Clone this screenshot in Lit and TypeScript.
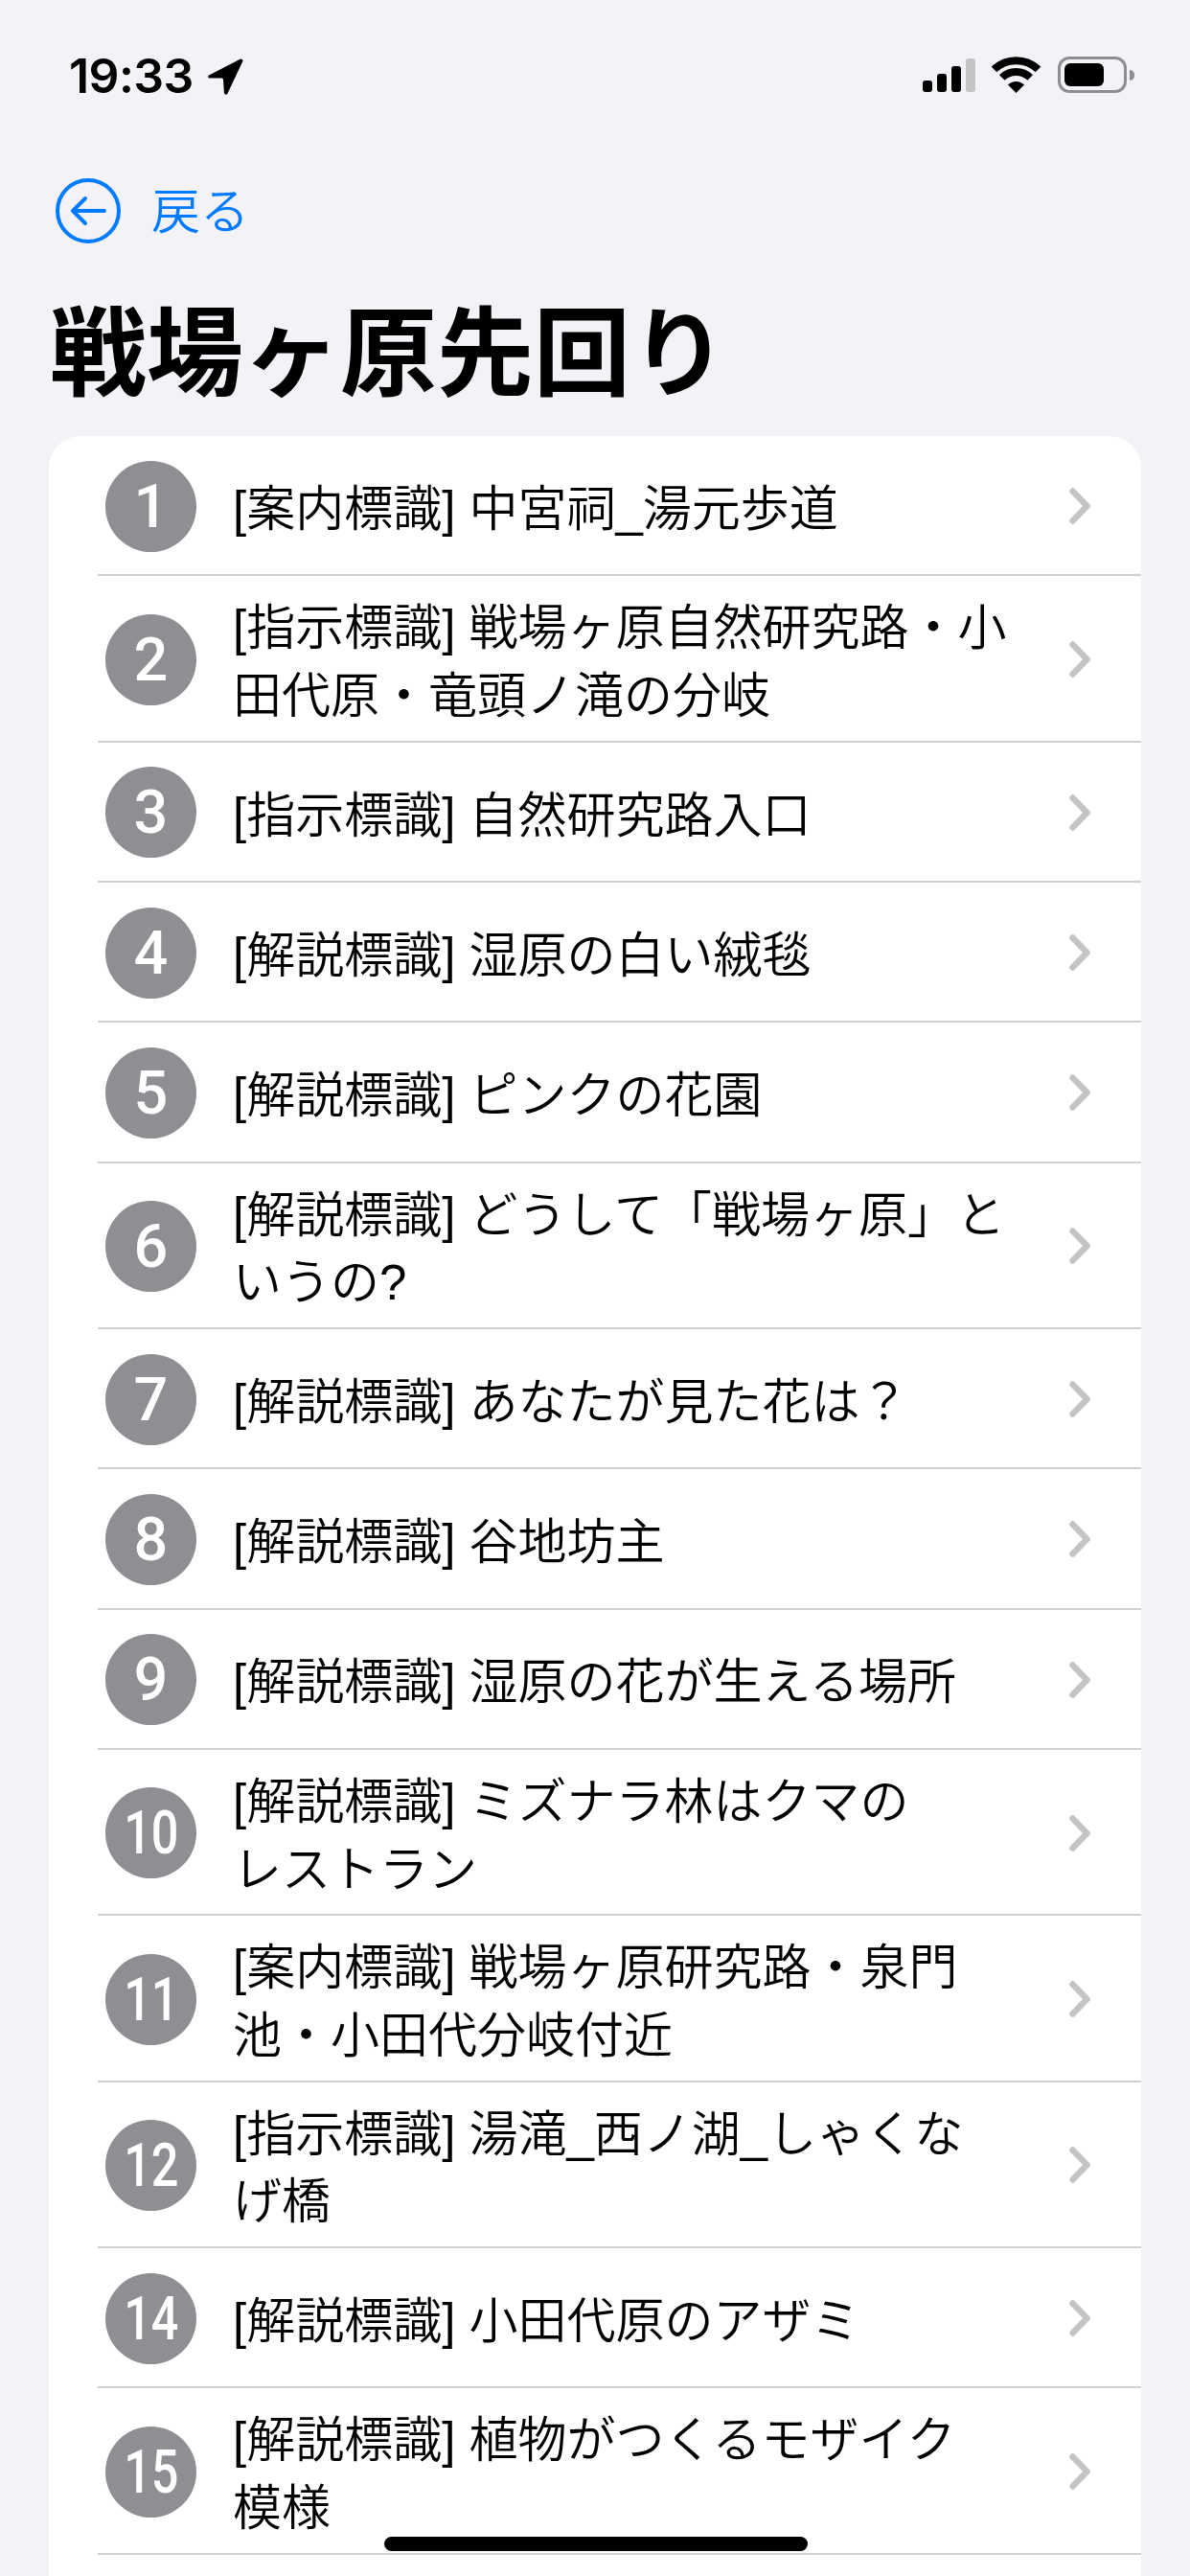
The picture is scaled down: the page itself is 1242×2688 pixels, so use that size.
import { LitElement, html, css, svg } from 'lit';
import { customElement } from 'lit/decorators.js';

const rows = [
  { no: '1', text: '[案内標識] 中宮祠_湯元歩道' },
  { no: '2', text: '[指示標識] 戦場ヶ原自然研究路・小\n田代原・竜頭ノ滝の分岐' },
  { no: '3', text: '[指示標識] 自然研究路入口' },
  { no: '4', text: '[解説標識] 湿原の白い絨毯' },
  { no: '5', text: '[解説標識] ピンクの花園' },
  { no: '6', text: '[解説標識] どうして「戦場ヶ原」と\nいうの?' },
  { no: '7', text: '[解説標識] あなたが見た花は？' },
  { no: '8', text: '[解説標識] 谷地坊主' },
  { no: '9', text: '[解説標識] 湿原の花が生える場所' },
  { no: '10', text: '[解説標識] ミズナラ林はクマの\nレストラン' },
  { no: '11', text: '[案内標識] 戦場ヶ原研究路・泉門\n池・小田代分岐付近' },
  { no: '12', text: '[指示標識] 湯滝_西ノ湖_しゃくな\nげ橋' },
  { no: '14', text: '[解説標識] 小田代原のアザミ' },
  { no: '15', text: '[解説標識] 植物がつくるモザイク\n模様' },
];

const chevron = svg`<path d="M3.5 3.5 18.5 19 3.5 34.5" fill="none" stroke="#c4c4c6" stroke-width="6.5" stroke-linecap="round" stroke-linejoin="round"/>`;

@customElement('app-root')
export class AppRoot extends LitElement {
  static styles = css`
    :host {
      display: block;
      font-family: 'Liberation Sans', 'Noto Sans CJK JP', sans-serif;
    }

    .page {
      position: relative;
      display: flex;
      flex-direction: column;
      height: 2688px;
      overflow: hidden;
      background: #f2f2f7;
      color: #000;
    }

    .status {
      display: flex;
      align-items: flex-start;
      height: 58px;
      padding: 58px 58px 0 72px;
    }

    .time {
      font-family: Inter, sans-serif;
      font-size: 50px;
      font-weight: 600;
      line-height: 42px;
      letter-spacing: -0.6px;
    }

    .arrow {
      margin: 3px 0 0 14px;
    }

    .status-right {
      display: flex;
      margin-left: auto;
    }

    .signal {
      display: flex;
      align-items: flex-end;
      gap: 5px;
      height: 35px;
      margin: 3px 17px 0 0;
    }

    .signal i {
      width: 10px;
      border-radius: 3px;
      background: #000;
    }

    .signal i.off {
      background: #c4c4c6;
    }

    .wifi {
      margin-right: 18px;
    }

    .battery {
      display: flex;
      align-items: center;
      margin-top: 1px;
    }

    .battery-body {
      box-sizing: border-box;
      width: 72px;
      height: 38px;
      padding: 4px;
      border: 3px solid #8e8e90;
      border-radius: 12px;
    }

    .battery-fill {
      width: 41px;
      height: 100%;
      border-radius: 6px;
      background: #000;
    }

    .battery-nub {
      width: 5px;
      height: 11px;
      margin-left: 3px;
      border-radius: 0 6px 6px 0;
      background: #8e8e90;
    }

    .back {
      display: flex;
      align-items: center;
      gap: 32px;
      height: 68px;
      margin: 70px 0 0 58px;
      color: #007aff;
      font-size: 51px;
      font-weight: 350;
      line-height: 68px;
    }

    .back span {
      margin-top: 3px;
    }

    h1 {
      margin: 56px 0 0 52px;
      font-size: 101px;
      font-weight: 700;
      line-height: 120px;
    }

    .card {
      flex: 1;
      margin: 25px 51px 0;
      padding-left: 51px;
      overflow: hidden;
      border-radius: 33px 33px 0 0;
      background: #fff;
    }

    .row {
      box-sizing: border-box;
      display: flex;
      align-items: center;
      min-height: 146.33px;
      padding: 16px 53px 14px 8px;
      border-bottom: 2px solid #d0d0d2;
    }

    .badge {
      flex: none;
      display: flex;
      align-items: center;
      justify-content: center;
      width: 95px;
      height: 95px;
      margin-right: 38px;
      border-radius: 50%;
      background: #8e8e93;
      color: #fff;
      font-family: Roboto, sans-serif;
      font-size: 63px;
      font-weight: 500;
    }

    .badge.wide span {
      transform: scaleX(0.8);
    }

    .text {
      flex: 1;
      margin: 4px 0 -4px;
      font-size: 51px;
      font-weight: 350;
      line-height: 70.67px;
      white-space: pre-line;
    }

    .home {
      position: absolute;
      left: 401px;
      top: 2647px;
      width: 442px;
      height: 15px;
      border-radius: 8px;
      background: #000;
    }
  `;

  render() {
    return html`
      <div class="page">
        <div class="status">
          <span class="time">19:33</span>
          <svg class="arrow" width="38" height="38" viewBox="0 0 38 38">
            <path d="M2.2 17.5 34.5.8c1.8-.9 3.4.6 2.7 2.4L21.5 36.4c-.8 1.8-3.4 1.4-3.6-.5l-.9-13.6c-.1-1-.8-1.7-1.8-1.8L2.9 20.6c-1.9-.1-2.4-2.2-.7-3.1z" fill="#000"/>
          </svg>
          <div class="status-right">
            <div class="signal">
              <i style="height:12px"></i>
              <i style="height:19px"></i>
              <i style="height:27px"></i>
              <i class="off" style="height:35px"></i>
            </div>
            <svg class="wifi" width="51" height="39" viewBox="0 0 51 39">
              <path d="M2.5 14.5a33 33 0 0 1 46 0M10.8 23a21 21 0 0 1 29.4 0" fill="none" stroke="#000" stroke-width="8"/>
              <path d="M25.5 39 17 30.5a12 12 0 0 1 17 0z" fill="#000"/>
            </svg>
            <div class="battery">
              <div class="battery-body"><div class="battery-fill"></div></div>
              <div class="battery-nub"></div>
            </div>
          </div>
        </div>

        <div class="back">
          <svg width="68" height="68" viewBox="0 0 68 68">
            <circle cx="34" cy="34" r="32" fill="none" stroke="#007aff" stroke-width="4"/>
            <path d="M51 34H18M31 21 18 34l13 13" fill="none" stroke="#007aff" stroke-width="4" stroke-linecap="round" stroke-linejoin="round"/>
          </svg>
          <span>戻る</span>
        </div>

        <h1>戦場ヶ原先回り</h1>

        <div class="card">
          ${rows.map(r => html`
            <div class="row">
              <div class="badge ${r.no.length > 1 ? 'wide' : ''}"><span>${r.no}</span></div>
              <div class="text">${r.text}</div>
              <svg width="22" height="38" viewBox="0 0 22 38">${chevron}</svg>
            </div>
          `)}
        </div>

        <div class="home"></div>
      </div>
    `;
  }
}
